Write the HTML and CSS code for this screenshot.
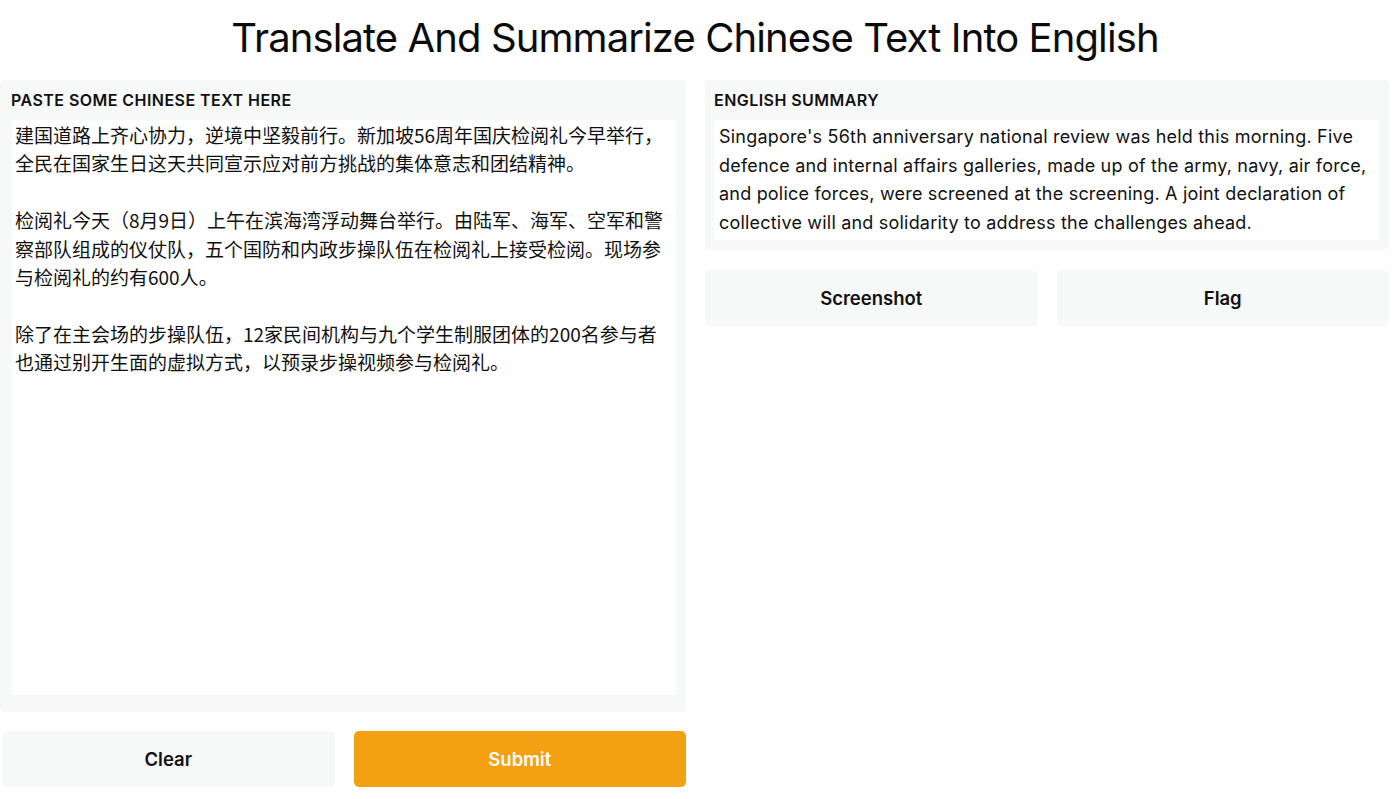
FILE: index.html
```html
<!DOCTYPE html>
<html lang="en">
<head>
<meta charset="utf-8">
<title>Translate And Summarize Chinese Text Into English</title>
<link rel="stylesheet" href="styles.css">
</head>
<body>
<h1 class="title">Translate And Summarize Chinese Text Into English</h1>
<main class="layout">
  <section class="column">
    <div class="panel panel-input">
      <div class="label">PASTE SOME CHINESE TEXT HERE</div>
      <div class="box box-input" lang="zh-CN">
        <p>建国道路上齐心协力，逆境中坚毅前行。新加坡56周年国庆检阅礼今早举行，<br>全民在国家生日这天共同宣示应对前方挑战的集体意志和团结精神。</p>
        <p>检阅礼今天（8月9日）上午在滨海湾浮动舞台举行。由陆军、海军、空军和警<br>察部队组成的仪仗队，五个国防和内政步操队伍在检阅礼上接受检阅。现场参<br>与检阅礼的约有600人。</p>
        <p>除了在主会场的步操队伍，12家民间机构与九个学生制服团体的200名参与者<br>也通过别开生面的虚拟方式，以预录步操视频参与检阅礼。</p>
      </div>
    </div>
    <div class="buttons">
      <button class="btn">Clear</button>
      <button class="btn btn-primary">Submit</button>
    </div>
  </section>
  <section class="column">
    <div class="panel panel-output">
      <div class="label">ENGLISH SUMMARY</div>
      <div class="box box-output">Singapore's 56th anniversary national review was held this morning. Five<br>defence and internal affairs galleries, made up of the army, navy, air force,<br>and police forces, were screened at the screening. A joint declaration of<br>collective will and solidarity to address the challenges ahead.</div>
    </div>
    <div class="buttons buttons-out">
      <button class="btn">Screenshot</button>
      <button class="btn">Flag</button>
    </div>
  </section>
</main>
</body>
</html>
```
FILE: styles.css
```css
* { box-sizing: border-box; }
html, body { margin: 0; padding: 0; background: #ffffff; }
body {
  font-family: "Inter", "Liberation Sans", "Noto Sans CJK SC", sans-serif;
  color: #111;
  width: 1400px;
  height: 799px;
  overflow: hidden;
}
.title {
  margin: 0;
  width: 1390px;
  height: 80px;
  padding-top: 14px;
  text-align: center;
  font-weight: 400;
  font-size: 40px;
  line-height: 48px;
  letter-spacing: -0.9px;
  color: #0b0b0b;
}
.layout {
  display: grid;
  grid-template-columns: 686px 684px;
  column-gap: 19px;
}
.column { display: flex; flex-direction: column; }
.panel {
  background: #f7f8f8;
  border-radius: 4px;
  padding: 10px 10px 10px 11px;
}
.panel-input {
  height: 632px;
  display: flex;
  flex-direction: column;
  padding-bottom: 17px;
}
.panel-output { height: 170px; padding-left: 9px; }
.label {
  font-size: 16px;
  font-weight: 600;
  line-height: 21px;
  color: #111;
  letter-spacing: 0.45px;
}
.box {
  background: #fff;
  margin-top: 9px;
  white-space: nowrap;
  color: #111;
}
.box-input {
  flex: 1;
  margin-left: 1px;
  padding: 1px 3px;
  font-family: "Noto Sans CJK SC", "Inter", sans-serif;
  font-size: 19px;
  line-height: 28.4px;
}
.box-input p { margin: 0 0 28.4px; }
.box-output {
  height: 120px;
  padding: 3px 5px;
  font-size: 18px;
  letter-spacing: 0.2px;
  line-height: 28.5px;
}
.buttons {
  display: grid;
  grid-template-columns: 1fr 1fr;
  column-gap: 19px;
  margin-top: 19px;
  padding-left: 2px;
}
.buttons-out { margin-top: 20px; padding-left: 0; }
.btn {
  height: 56px;
  border: 0;
  border-radius: 5px;
  background: #f7f8f8;
  font-family: "Inter", "Liberation Sans", sans-serif;
  font-size: 18.5px;
  font-weight: 600;
  color: #111;
}
.btn-primary { background: #f4a013; color: #fff; }
```
